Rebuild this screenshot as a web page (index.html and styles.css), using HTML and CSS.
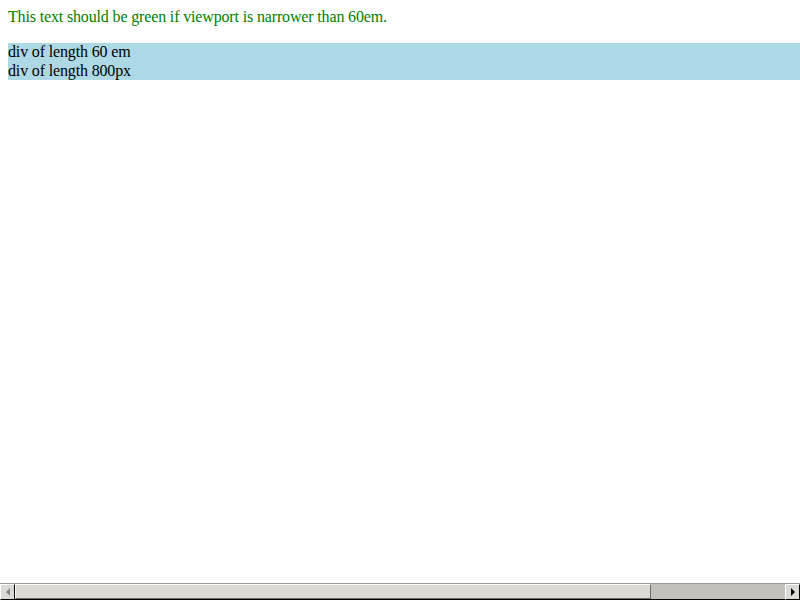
FILE: index.html
```html
<!DOCTYPE html>
<html>
<head>
<meta charset="utf-8">
<link rel="stylesheet" href="styles.css">
</head>
<body>
<p class="note">This text should be green if viewport is narrower than 60em.</p>
<div class="box">
  <div class="line">div of length 60 em</div>
  <div class="line">div of length 800px</div>
</div>
<div class="hscroll">
  <div class="btn"><span class="arrow-left"></span></div>
  <div class="track">
    <div class="thumb"></div>
  </div>
  <div class="btn"><span class="arrow-right"></span></div>
</div>
</body>
</html>
```
FILE: styles.css
```css
html {
  overflow: hidden;
}
body {
  margin: 8px 0 0 8px;
  font-family: "Liberation Serif", "Times New Roman", serif;
  font-size: 16px;
  line-height: 18.5px;
  letter-spacing: -0.15px;
  color: #000;
  background: #fff;
}
.note {
  margin: 0 0 16.5px 0;
  color: #008000;
}
.box {
  background: #add8e6;
}
.hscroll {
  position: fixed;
  left: 0;
  right: 0;
  bottom: 0;
  height: 16px;
  display: flex;
  border-top: 1px solid #9c9a95;
  background: #c3c1bc;
}
.btn {
  width: 13px;
  height: 14px;
  background: #dcdad5;
  border-top: 1px solid #ffffff;
  border-left: 1px solid #ffffff;
  border-right: 1px solid #000000;
  border-bottom: 1px solid #000000;
  display: flex;
  align-items: center;
  justify-content: center;
  flex: none;
}
.track {
  flex: 1;
  display: flex;
  border-bottom: 1px solid #000;
}
.thumb {
  width: 634px;
  height: 13px;
  background: #dcdad5;
  border-top: 1px solid #ffffff;
  border-left: 1px solid #ffffff;
  border-right: 1px solid #6d6c69;
  border-bottom: 1px solid #6d6c69;
}
.arrow-left {
  width: 0;
  height: 0;
  border-top: 4px solid transparent;
  border-bottom: 4px solid transparent;
  border-right: 4px solid #8a8985;
}
.arrow-right {
  width: 0;
  height: 0;
  border-top: 4px solid transparent;
  border-bottom: 4px solid transparent;
  border-left: 4px solid #000;
}
```
